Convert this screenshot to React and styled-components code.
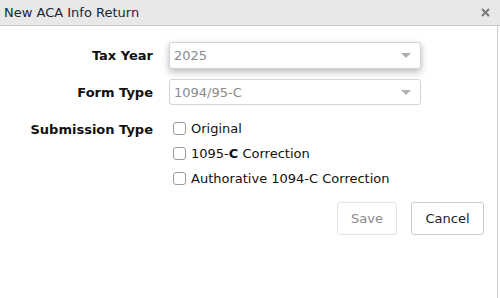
import React from "react";
import styled, { createGlobalStyle } from "styled-components";

const GlobalStyle = createGlobalStyle`
  html, body {
    margin: 0;
    padding: 0;
    background: #ffffff;
  }
  body {
    font-family: "DejaVu Sans", Verdana, sans-serif;
    font-size: 13px;
    color: #222;
  }
`;

const Dialog = styled.div`
  width: 500px;
  height: 298px;
  display: flex;
  flex-direction: column;
  overflow: hidden;
`;

const TitleBar = styled.div`
  height: 26px;
  box-sizing: border-box;
  background: #e8e8e8;
  border-bottom: 1px solid #c6c6c6;
  display: flex;
  align-items: center;
  justify-content: space-between;
  padding: 0 8px 0 4px;
`;

const Title = styled.span`
  font-size: 13px;
  color: #1a2633;
`;

const Close = styled.button`
  border: none;
  background: none;
  padding: 0;
  width: 14px;
  height: 14px;
  display: flex;
  align-items: center;
  justify-content: center;
  cursor: pointer;
`;

const Body = styled.div`
  flex: 1;
  width: 498px;
  box-sizing: border-box;
  border-right: 1px solid #cfcfcf;
  padding: 16px 0 0 0;
`;

const Form = styled.div`
  display: grid;
  grid-template-columns: 153px 252px;
  column-gap: 16px;
  row-gap: 10px;
  align-items: center;
`;

const Label = styled.div`
  font-weight: bold;
  text-align: right;
  font-size: 13px;
  color: #111;
  align-self: ${(p) => (p.$top ? "start" : "center")};
  padding-top: ${(p) => (p.$top ? "7px" : "0")};
`;

const Select = styled.div`
  height: ${(p) => (p.$tall ? "27px" : "26px")};
  box-sizing: border-box;
  border: 1px solid #d4d4d4;
  border-radius: 3px;
  background: #fff;
  display: flex;
  align-items: center;
  justify-content: space-between;
  padding: 0 9px 0 4px;
  color: #8a8a8a;
  box-shadow: ${(p) => (p.$focus ? "0 3px 7px rgba(0,0,0,0.28)" : "none")};
`;

const Caret = styled.span`
  width: 0;
  height: 0;
  border-left: 5px solid transparent;
  border-right: 5px solid transparent;
  border-top: 5px solid #b0b0b0;
`;

const Options = styled.div`
  display: flex;
  flex-direction: column;
  gap: 11px;
  padding-top: 6px;
`;

const Option = styled.label`
  display: flex;
  align-items: center;
  gap: 5px;
  height: 14px;
  color: #111;
`;

const Box = styled.span`
  width: 13px;
  height: 13px;
  box-sizing: border-box;
  border: 1px solid #9a9a9a;
  border-radius: 3px;
  background: #fff;
  margin-left: 4px;
`;

const Actions = styled.div`
  display: flex;
  justify-content: flex-end;
  gap: 14px;
  padding: 17px 13px 0 0;
`;

const Button = styled.button`
  height: 33px;
  box-sizing: border-box;
  padding: 0 13px;
  font-family: "DejaVu Sans", Verdana, sans-serif;
  font-size: 13px;
  background: #fff;
  border-radius: 3px;
  border: 1px solid ${(p) => (p.disabled ? "#e2e2e2" : "#cccccc")};
  color: ${(p) => (p.disabled ? "#8a8a8a" : "#222")};
  min-width: ${(p) => p.$w};
`;

export default function App() {
  return (
    <Dialog>
      <GlobalStyle />
      <TitleBar>
        <Title>New ACA Info Return</Title>
        <Close aria-label="close">
          <svg width="9" height="9" viewBox="0 0 9 9">
            <path d="M1 1L8 8M8 1L1 8" stroke="#7a7a7a" strokeWidth="2" />
          </svg>
        </Close>
      </TitleBar>
      <Body>
        <Form>
          <Label>Tax Year</Label>
          <Select $focus $tall>
            <span>2025</span>
            <Caret />
          </Select>
          <Label>Form Type</Label>
          <Select>
            <span>1094/95-C</span>
            <Caret />
          </Select>
          <Label $top>Submission Type</Label>
          <Options>
            <Option>
              <Box />
              Original
            </Option>
            <Option>
              <Box />
              <span>
                1095-<b>C</b> Correction
              </span>
            </Option>
            <Option>
              <Box />
              Authorative 1094-C Correction
            </Option>
          </Options>
        </Form>
        <Actions>
          <Button disabled $w="60px">Save</Button>
          <Button $w="73px">Cancel</Button>
        </Actions>
      </Body>
    </Dialog>
  );
}
